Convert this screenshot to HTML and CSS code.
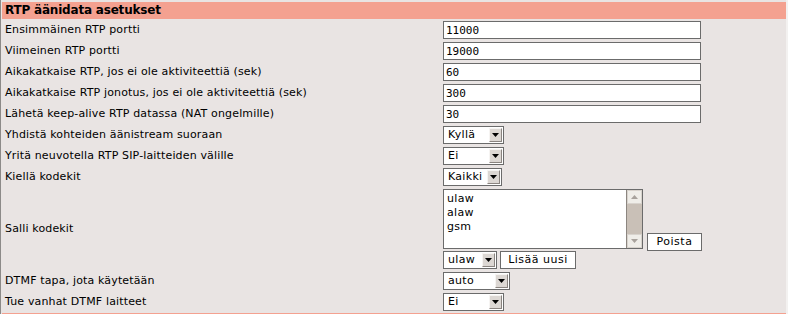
FILE: index.html
```html
<!DOCTYPE html>
<html lang="fi">
<head>
<meta charset="utf-8">
<title>RTP äänidata asetukset</title>
<link rel="stylesheet" href="styles.css">
</head>
<body>
<div class="page">
  <div class="head">RTP äänidata asetukset</div>
  <div class="grid">
    <div class="lbl">Ensimmäinen RTP portti</div>
    <div class="fld"><input class="txt" type="text" value="11000"></div>

    <div class="lbl">Viimeinen RTP portti</div>
    <div class="fld"><input class="txt" type="text" value="19000"></div>

    <div class="lbl">Aikakatkaise RTP, jos ei ole aktiviteettiä (sek)</div>
    <div class="fld"><input class="txt" type="text" value="60"></div>

    <div class="lbl">Aikakatkaise RTP jonotus, jos ei ole aktiviteettiä (sek)</div>
    <div class="fld"><input class="txt" type="text" value="300"></div>

    <div class="lbl">Lähetä keep-alive RTP datassa (NAT ongelmille)</div>
    <div class="fld"><input class="txt" type="text" value="30"></div>

    <div class="lbl">Yhdistä kohteiden äänistream suoraan</div>
    <div class="fld"><span class="sel w61"><span class="sv">Kyllä</span><span class="sb"><svg width="7" height="4" viewBox="0 0 7 4"><path d="M0 0h7L3.5 4z" fill="#000"/></svg></span></span></div>

    <div class="lbl">Yritä neuvotella RTP SIP-laitteiden välille</div>
    <div class="fld"><span class="sel w61"><span class="sv">Ei</span><span class="sb"><svg width="7" height="4" viewBox="0 0 7 4"><path d="M0 0h7L3.5 4z" fill="#000"/></svg></span></span></div>

    <div class="lbl">Kiellä kodekit</div>
    <div class="fld"><span class="sel w59"><span class="sv">Kaikki</span><span class="sb"><svg width="7" height="4" viewBox="0 0 7 4"><path d="M0 0h7L3.5 4z" fill="#000"/></svg></span></span></div>

    <div class="lbl">Salli kodekit</div>
    <div class="fld multi">
      <div class="line1">
        <div class="list">
          <div class="items">
            <div>ulaw</div>
            <div>alaw</div>
            <div>gsm</div>
          </div>
          <div class="sbar">
            <span class="sbtn"><svg width="7" height="4" viewBox="0 0 7 4"><path d="M0 4h7L3.5 0z" fill="#a8a29c"/></svg></span>
            <span class="thumb"></span>
            <span class="sbtn"><svg width="7" height="4" viewBox="0 0 7 4"><path d="M0 0h7L3.5 4z" fill="#a8a29c"/></svg></span>
          </div>
        </div>
        <button class="btn bpoista" type="button">Poista</button>
      </div>
      <div class="line2">
        <span class="sel w54"><span class="sv">ulaw</span><span class="sb"><svg width="7" height="4" viewBox="0 0 7 4"><path d="M0 0h7L3.5 4z" fill="#000"/></svg></span></span>
        <button class="btn blisaa" type="button">Lisää uusi</button>
      </div>
    </div>

    <div class="lbl">DTMF tapa, jota käytetään</div>
    <div class="fld"><span class="sel w67"><span class="sv">auto</span><span class="sb"><svg width="7" height="4" viewBox="0 0 7 4"><path d="M0 0h7L3.5 4z" fill="#000"/></svg></span></span></div>

    <div class="lbl">Tue vanhat DTMF laitteet</div>
    <div class="fld"><span class="sel w61"><span class="sv">Ei</span><span class="sb"><svg width="7" height="4" viewBox="0 0 7 4"><path d="M0 0h7L3.5 4z" fill="#000"/></svg></span></span></div>
  </div>
  <div class="head next"></div>
</div>
</body>
</html>
```

FILE: styles.css
```css
html, body {
  margin: 0;
  padding: 0;
  background: #e9e4e3;
}
body {
  font-family: "DejaVu Sans", Verdana, sans-serif;
  font-size: 11px;
  color: #000;
  height: 314px;
  overflow: hidden;
}
.page {
  border-left: 1px solid #8c8a88;
  border-right: 2px solid #f3f1f0;
  padding: 2px 0 0 1px;
  height: 312px;
}
.head {
  background: #f4a190;
  height: 17px;
  line-height: 17px;
  font-size: 12px;
  font-weight: bold;
  letter-spacing: -0.2px;
  padding-left: 3px;
}
.head.next {
  margin-top: 1px;
  height: 2px;
}
.grid {
  display: grid;
  grid-template-columns: 441px 1fr;
}
.lbl {
  padding-left: 3px;
  display: flex;
  align-items: center;
  white-space: nowrap;
  letter-spacing: 0.15px;
}
.fld {
  padding: 2px 0 1px;
  display: flex;
  align-items: flex-start;
}
.fld.multi {
  flex-direction: column;
}
.txt {
  box-sizing: border-box;
  width: 258px;
  height: 18px;
  margin: 0;
  border: 1px solid #6b6b6b;
  background: #fff;
  padding: 0 2px;
  font-family: "DejaVu Sans Mono", monospace;
  font-size: 11px;
  color: #000;
  outline: none;
}
.sel {
  box-sizing: border-box;
  height: 18px;
  border: 1px solid #6b6b6b;
  background: #fff;
  display: flex;
  align-items: stretch;
}
.w61 { width: 61px; }
.w59 { width: 59px; }
.w54 { width: 54px; }
.w67 { width: 67px; }
.sv {
  flex: 1;
  padding-left: 4px;
  line-height: 16px;
  letter-spacing: 0.3px;
}
.sb {
  width: 13px;
  margin: 1px 1px 1px 0;
  background: #dcd7d3;
  border-left: 1px solid #f6f4f2;
  border-top: 1px solid #f6f4f2;
  border-right: 1px solid #8a8480;
  border-bottom: 1px solid #8a8480;
  box-sizing: border-box;
  display: flex;
  align-items: center;
  justify-content: center;
}
.line1 {
  display: flex;
  align-items: flex-end;
  height: 62px;
}
.list {
  box-sizing: border-box;
  width: 200px;
  height: 60px;
  align-self: flex-start;
  border: 1px solid #6b6b6b;
  background: #fff;
  display: flex;
}
.items {
  flex: 1;
  padding: 2px 0 0 3px;
  line-height: 14px;
  letter-spacing: 0.3px;
}
.sbar {
  width: 15px;
  display: flex;
  flex-direction: column;
  background: #c9c0b7;
  border-left: 1px solid #8c8680;
}
.sbtn {
  height: 14px;
  background: #efede8;
  border: 1px solid #d8d3cd;
  box-sizing: border-box;
  display: flex;
  align-items: center;
  justify-content: center;
}
.thumb {
  flex: 1;
  background: #c9c0b7;
}
.btn {
  box-sizing: border-box;
  height: 18px;
  margin: 0;
  padding: 0;
  border: 1px solid #6b6b6b;
  background: #fff;
  font-family: "DejaVu Sans", Verdana, sans-serif;
  font-size: 11px;
  letter-spacing: 0.5px;
  color: #000;
  line-height: 16px;
}
.bpoista {
  width: 55px;
  margin-left: 4px;
}
.line2 {
  display: flex;
  gap: 3px;
  height: 18px;
}
.blisaa {
  width: 76px;
}
```
